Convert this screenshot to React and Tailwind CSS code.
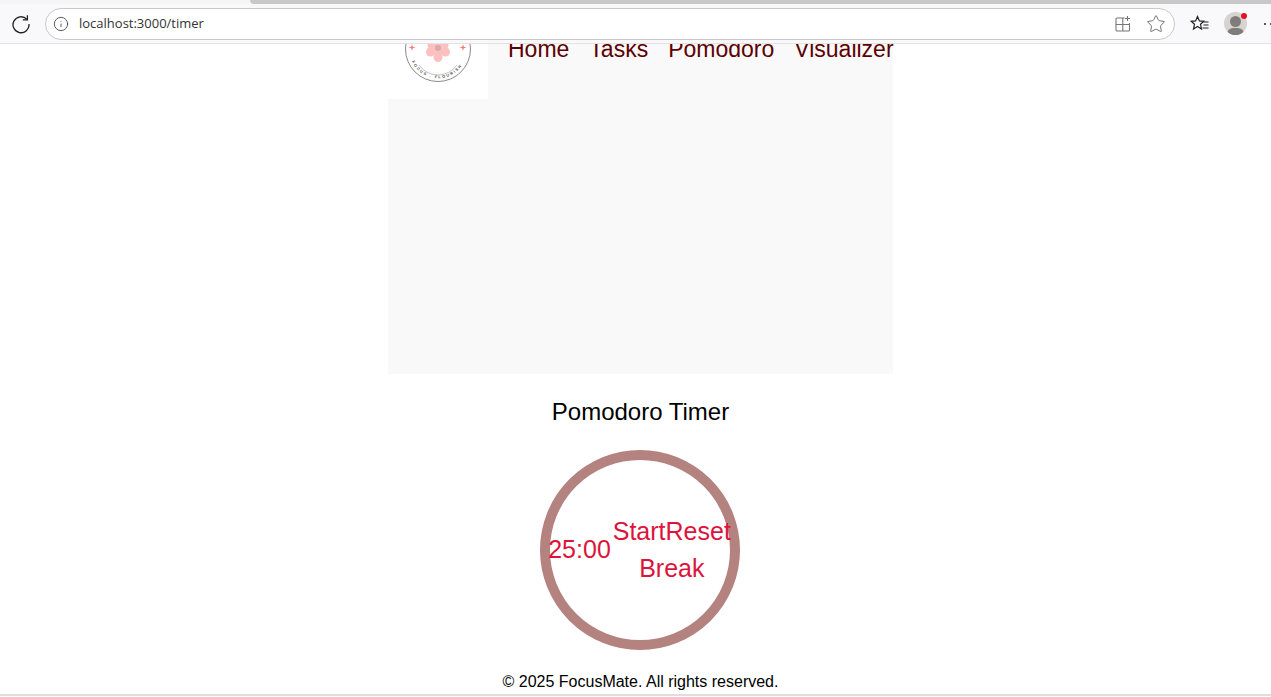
import React from "react";
import { Info, Star } from "lucide-react";

function Logo() {
  return (
    <svg width="100" height="100" viewBox="0 0 100 100" className="block">
      <defs>
        <path id="arc" d="M 23.5 62 A 29 29 0 0 0 76.5 62" />
      </defs>
      <circle cx="50" cy="50" r="32.5" fill="none" stroke="#8a8a8a" strokeWidth="1" />
      <path d="M 31 66 A 23 23 0 0 0 69 66" fill="none" stroke="#a8a8a8" strokeWidth="0.7" />
      <g fill="#fcc0c0">
        <circle cx="50" cy="58.5" r="4.5" />
        <circle cx="42.5" cy="53" r="4.5" />
        <circle cx="57.5" cy="53" r="4.5" />
        <circle cx="44" cy="46" r="4.5" />
        <circle cx="56" cy="46" r="4.5" />
        <circle cx="50" cy="50" r="7" />
      </g>
      <circle cx="50" cy="49" r="3" fill="#dba9a9" />
      <g fill="#f47c7c">
        <path d="M24 45l.8 2.7 2.7.8-2.7.8-.8 2.7-.8-2.7-2.7-.8 2.7-.8z" />
        <path d="M75 45l.8 2.7 2.7.8-2.7.8-.8 2.7-.8-2.7-2.7-.8 2.7-.8z" />
      </g>
      <text fontSize="3.8" fontWeight="700" fill="#444" letterSpacing="1.6" fontFamily="'Liberation Sans', sans-serif">
        <textPath href="#arc" startOffset="1%">FOCUS . FLOURISH</textPath>
      </text>
    </svg>
  );
}

function Browser() {
  return (
    <div className="relative z-10 h-[44px] shrink-0 bg-[#f9f9fb] border-b border-[#e3e3e3]">
      <div className="flex h-[4px]">
        <div className="w-[250px] bg-[#f5f5f5]" />
        <div className="flex-1 bg-[#c8c8c8] rounded-bl-[5px]" />
      </div>
      <div className="flex h-[39px] items-center pl-[11px]">
        <svg width="20" height="20" viewBox="0 0 20 20" fill="none" stroke="#222" strokeWidth="1.3" className="mr-[14px]">
          <path d="M15.8 5.2A8 8 0 1 0 18 10" />
          <path d="M16.4 1.2v4.6h-4.6" />
        </svg>
        <div className="flex items-center w-[1130px] h-[32px] bg-white border border-[#c9c9c9] rounded-full pl-[7px] pr-[8px]">
          <Info size={16} strokeWidth={1.3} className="text-[#444] mr-[10px]" />
          <span className="text-[13px] text-[#333] font-['Open_Sans','Liberation_Sans',sans-serif]">localhost:3000/timer</span>
          <div className="flex-1" />
          <svg width="18" height="18" viewBox="0 0 18 18" fill="none" stroke="#777" strokeWidth="1.1" className="mr-[14px]">
            <path d="M10.5 3H3a1 1 0 0 0-1 1v11a1 1 0 0 0 1 1h11.5a1 1 0 0 0 1-1V8M8.8 3v13M2 9.5h13.5M13.5 1v5M11 3.5h5" />
          </svg>
          <Star size={20} strokeWidth={1.1} className="text-[#666]" />
        </div>
        <svg width="20" height="20" viewBox="0 0 20 20" fill="none" stroke="#222" strokeWidth="1.2" className="ml-[15px]">
          <path d="M7.5 2.5l1.9 4.4 4.4.4-3.3 3 1 4.7-4-2.5-4 2.5 1-4.7-3.3-3 4.4-.4z" />
          <path d="M13.5 8h5M13.5 11h5M12.5 14h6" />
        </svg>
        <div className="relative ml-[14px] w-[23px] h-[23px] rounded-full bg-[#d6d3d1] overflow-hidden">
          <div className="absolute left-[6px] top-[4px] w-[11px] h-[11px] rounded-full bg-[#807c79]" />
          <div className="absolute left-[3px] top-[16px] w-[17px] h-[12px] rounded-full bg-[#807c79]" />
        </div>
        <div className="absolute left-[1241px] top-[13px] w-[6px] h-[6px] rounded-full bg-[#e81123]" />
        <div className="absolute left-[1264px] top-[23px] flex gap-[4px]">
          <div className="w-[2px] h-[2px] rounded-full bg-[#222]" />
          <div className="w-[2px] h-[2px] rounded-full bg-[#222]" />
        </div>
      </div>
    </div>
  );
}

export default function App() {
  return (
    <div className="w-[1271px] h-[697px] flex flex-col overflow-hidden bg-white text-black font-['Liberation_Sans',Arial,sans-serif]">
      <Browser />
      <main className="relative flex-1 min-h-0 overflow-hidden">
        <div className="w-[1281px] flex flex-col items-center">
          <nav className="-mt-[45px] w-[505px] h-[375px] shrink-0 bg-[#f9f9f9] flex items-start">
            <div className="w-[100px] h-[100px] bg-white shrink-0">
              <Logo />
            </div>
            <ul className="flex gap-[20px] pl-[20px] pt-[35px] text-[23px] leading-[30px] text-[#5c0000] whitespace-nowrap">
              <li>Home</li>
              <li>Tasks</li>
              <li>Pomodoro</li>
              <li>Visualizer</li>
            </ul>
          </nav>
          <h1 className="mt-[24px] text-[24px] leading-[28px]">Pomodoro Timer</h1>
          <div className="mt-[24px] mr-[1px] w-[200px] h-[200px] shrink-0 rounded-full border-[10px] border-[#b4827f] flex items-center justify-center text-[25px] text-[#dc143c]">
            <span className="leading-[30px] shrink-0 mb-[2px]">25:00</span>
            <div className="flex flex-wrap justify-center w-[120px] shrink-0 ml-[1px]">
              <button className="h-[37px] leading-[37px]">Start</button>
              <button className="h-[37px] leading-[37px]">Reset</button>
              <button className="h-[37px] leading-[37px]">Break</button>
            </div>
          </div>
          <footer className="mt-[23px] text-[16px] leading-[18px]">© 2025 FocusMate. All rights reserved.</footer>
        </div>
        <div className="absolute left-0 right-0 bottom-[1px] h-[2px] bg-[#dedede]" />
      </main>
    </div>
  );
}
